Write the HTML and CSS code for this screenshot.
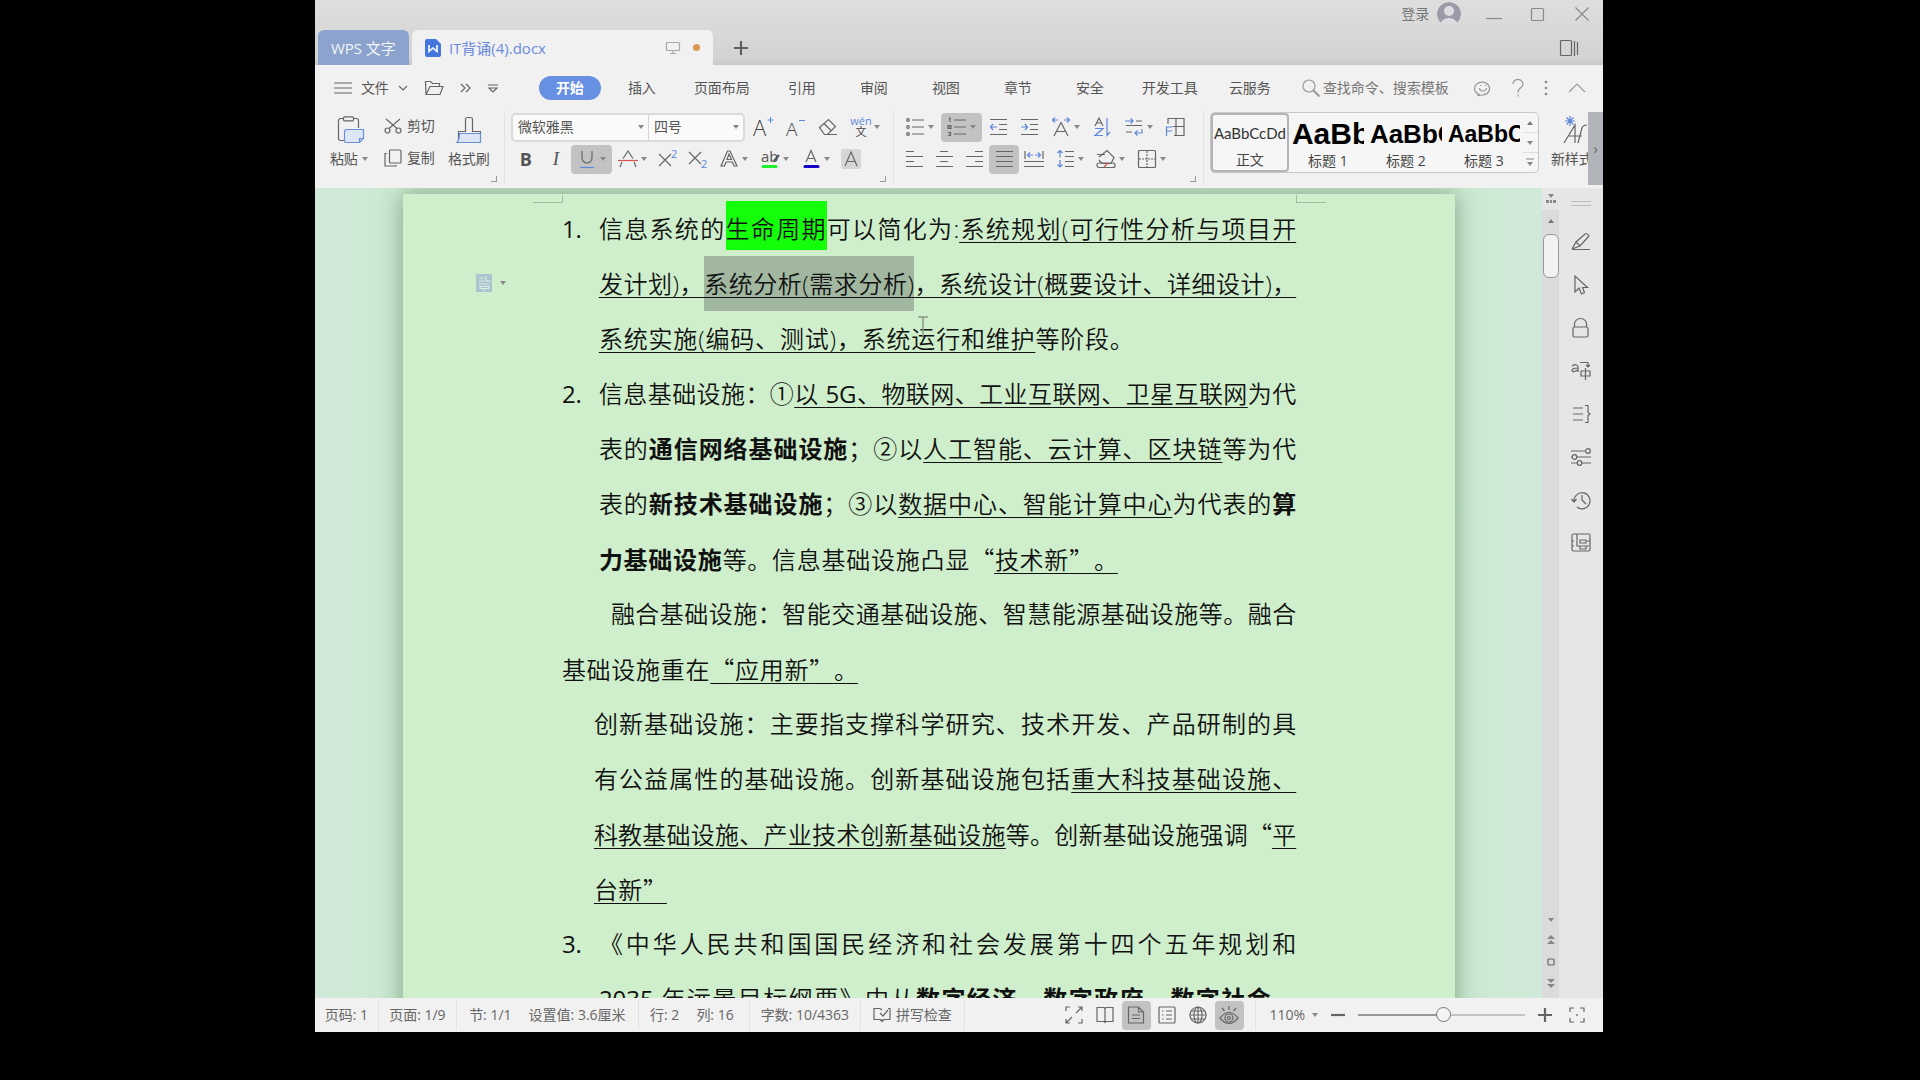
FILE: index.html
```html
<!DOCTYPE html>
<html lang="zh-CN">
<head>
<meta charset="utf-8">
<title>IT背诵(4).docx</title>
<link rel="stylesheet" href="styles.css">
</head>
<body>
<div class="app">
  <header class="titlebar">
    <div class="account-row">
      <button class="login">登录
        <svg width="24" height="24" viewBox="0 0 24 24"><defs><clipPath id="av"><circle cx="12" cy="12" r="12"/></clipPath></defs><g clip-path="url(#av)"><circle cx="12" cy="12" r="12" fill="#9a9ba6"/><circle cx="12" cy="9" r="5" fill="#dcdde2"/><path d="M2 24c2-5 5-8 10-8s8 3 10 8z" fill="#dcdde2"/></g></svg>
      </button>
      <button class="win" aria-label="最小化"><svg width="16" height="16"><path d="M0 12.500h16"/></svg></button>
      <button class="win" aria-label="最大化"><svg width="16" height="16"><rect x="1.500" y="2.500" width="12" height="12" rx="1"/></svg></button>
      <button class="win" aria-label="关闭"><svg width="16" height="16"><path d="M1.500 1.500l13 13M14.500 1.500l-13 13"/></svg></button>
    </div>
    <div class="tab-row">
      <button class="tab home-tab">WPS 文字</button>
      <div class="tab doc-tab">
        <svg width="16" height="18" viewBox="0 0 16 18"><path d="M2 0h9l5 5v11a2 2 0 0 1-2 2H2a2 2 0 0 1-2-2V2a2 2 0 0 1 2-2z" fill="#4477dd"/><path d="M4 6v6.500l4-3.500 4 3.500V6" fill="none" stroke="#fff" stroke-width="1.600"/></svg>
        <span class="doc-name">IT背诵(4).docx</span>
        <svg width="14" height="14" class="line-icon pale"><rect x=".5" y="1.500" width="13" height="8" rx="1"/><path d="M7 9.500v3M4 12.500h6"/></svg>
        <i class="dot"></i>
      </div>
      <button class="add" aria-label="新建"><svg width="16" height="16"><path d="M8 1v14M1 8h14" stroke="#606060" stroke-width="2.200"/></svg></button>
      <button class="pane" aria-label="窗格"><svg width="20" height="18" class="line-icon"><rect x="1.500" y="1.500" width="11" height="15" rx="1"/><path d="M15.500 2v15M18.500 3v13"/></svg></button>
    </div>
  </header>

  <nav class="menu">
    <button class="file"><svg width="18" height="12" class="line-icon"><path d="M0 1h18M0 6h18M0 11h18"/></svg><span>文件</span><svg width="10" height="6" class="line-icon"><path d="M1 1l4 4 4-4"/></svg></button>
    <button class="quick" aria-label="打开"><svg width="20" height="16" class="line-icon"><path d="M2 14.500l-.5-13h5l2 2h7v3M2 14.500l4-8h13l-3 8z"/></svg></button>
    <button class="quick" aria-label="更多"><svg width="12" height="10" class="line-icon"><path d="M1 1l4 4-4 4M6 1l4 4-4 4"/></svg></button>
    <button class="quick" aria-label="自定义"><svg width="10" height="9" class="line-icon"><path d="M0 1h10M1 4l4 4 4-4z"/></svg></button>
    <div class="menu-tabs">
      <button class="active"><span>开始</span></button>
      <button>插入</button><button class="wide">页面布局</button><button>引用</button><button>审阅</button><button>视图</button><button>章节</button><button>安全</button><button class="wide">开发工具</button><button>云服务</button>
    </div>
    <label class="search"><svg width="18" height="18" class="line-icon"><circle cx="7" cy="7" r="6"/><path d="M11.500 11.500l6 6" stroke-width="2"/></svg><input type="text" placeholder="查找命令、搜索模板" aria-label="查找命令"></label>
    <div class="menu-end">
      <button aria-label="反馈"><svg width="18" height="16" class="line-icon"><path d="M5 14.500a7.500 6.500 0 1 1 4 .5l-5 .5z"/><path d="M5.500 8a3.500 3 0 0 0 7 0M6.500 5v1M11.500 5v1"/></svg></button>
      <button aria-label="帮助"><svg width="12" height="18" class="line-icon"><path d="M1 5a5 4.500 0 1 1 8 3.500q-3 2-3 5M6 15.500v2"/></svg></button>
      <button aria-label="选项"><svg width="4" height="16"><g fill="#888"><circle cx="2" cy="2" r="1.300"/><circle cx="2" cy="8" r="1.300"/><circle cx="2" cy="14" r="1.300"/></g></svg></button>
      <button aria-label="收起"><svg width="18" height="10" class="line-icon"><path d="M1 9l8-8 8 8"/></svg></button>
    </div>
  </nav>

  <section class="ribbon">
    <div class="group clipboard">
      <button class="big"><svg width="28" height="28" class="line-icon"><path d="M8 24.500H3.500a2 2 0 0 1-2-2v-18a2 2 0 0 1 2-2h16a2 2 0 0 1 2 2V12" /><rect x="6.500" y=".8" width="10" height="4" rx="1" fill="#f1f1f1"/><path d="M9 13.500h17.500v9l-4 4H9a1.500 1.500 0 0 1-1.500-1.500V15z" fill="#dde6f5" stroke="#6a8fd8"/><path d="M26.500 22.500h-4v4" stroke="#6a8fd8"/></svg><span class="cap">粘贴<i class="arr"></i></span></button>
      <div class="stack">
        <button><svg width="18" height="16" class="line-icon"><circle cx="3.500" cy="12.500" r="2.500"/><circle cx="14.500" cy="12.500" r="2.500"/><path d="M2 1l11 9.500M16 1L5 10.500"/></svg>剪切</button>
        <button><svg width="18" height="18" class="line-icon"><rect x="5.500" y="1" width="11.500" height="13" rx="1"/><path d="M3 4.500H1v12.500h11v-1"/></svg>复制</button>
      </div>
      <button class="big painter"><svg width="26" height="28" class="line-icon"><path d="M2.500 24V15.500h7V3.500a2 2 0 0 1 2-2h3a2 2 0 0 1 2 2v12h8V18"/><path d="M3.500 17.500h21v9H1q2.500-3 2.500-9z" fill="#dde6f5" stroke="#6a8fd8"/></svg><span class="cap">格式刷</span></button>
      <i class="corner"></i>
    </div>

    <div class="group font">
      <div class="row first">
        <div class="combos">
          <span class="combo face"><select aria-label="字体"><option>微软雅黑</option></select><i class="arr"></i></span>
          <span class="combo size"><select aria-label="字号"><option>四号</option></select><i class="arr"></i></span>
        </div>
        <button class="tool" aria-label="增大字号"><svg width="22" height="22"><text x="0" y="20" class="ltr">A</text><path d="M17.500 1v6M14.500 4h6" stroke="#5f86d8"/></svg></button>
        <button class="tool" aria-label="减小字号"><svg width="22" height="22"><text x="1" y="20" class="ltr sm">A</text><path d="M14 4.500h6" stroke="#5f86d8"/></svg></button>
        <button class="tool" aria-label="清除格式"><svg width="20" height="20" class="line-icon"><path d="M1.500 10.500l9-8 7 7-8 8H6.500zM6 6.500l7 7M8 17.500h11"/></svg></button>
        <button class="tool drop" aria-label="拼音"><svg width="20" height="22"><text x="10" y="9" text-anchor="middle" class="tiny blue">wén</text><text x="10" y="20" text-anchor="middle" class="tiny">文</text></svg><i class="arr"></i></button>
      </div>
      <div class="row">
        <button class="tool bold" aria-label="加粗">B</button>
        <button class="tool italic" aria-label="倾斜">I</button>
        <button class="tool drop on" aria-label="下划线"><svg width="16" height="20" class="line-icon"><path d="M3 2v7a5 5 0 0 0 10 0V2"/><path d="M1 18.500h14" stroke="#5f86d8"/></svg><i class="arr"></i></button>
        <button class="tool drop" aria-label="删除线"><svg width="20" height="20" class="line-icon"><path d="M5 9.500L10 2l5 7.500M4 13l-2 5M16 13l2 5"/><path d="M0 11.500h20" stroke="#d9534f"/></svg><i class="arr"></i></button>
        <button class="tool" aria-label="上标"><svg width="20" height="20" class="line-icon"><path d="M1 5l12 12M13 5L1 17"/><text x="13" y="9" class="tiny blue">2</text></svg></button>
        <button class="tool" aria-label="下标"><svg width="20" height="20" class="line-icon"><path d="M1 3l12 12M13 3L1 15"/><text x="13" y="19" class="tiny blue">2</text></svg></button>
        <button class="tool drop" aria-label="文字效果"><svg width="20" height="20" class="line-icon"><path d="M2 17L8.500 2h2.500L18 17h-3l-1.500-4H7l-1.500 4zM8 10.500h4.500L10 5z"/></svg><i class="arr"></i></button>
        <button class="tool drop" aria-label="突出显示"><svg width="20" height="20"><text x="1" y="13" class="ab">ab</text><path d="M14 12l5-6" stroke="#555" stroke-width="2"/><path d="M3 17.500h13" stroke="#1fef2f" stroke-width="3" stroke-linecap="round"/></svg><i class="arr"></i></button>
        <button class="tool drop" aria-label="字体颜色"><svg width="20" height="20" class="line-icon"><path d="M5 13L10 1.500 15 13M6.500 9.500h7"/><path d="M4 17.500h13" stroke="#1200c8" stroke-width="3" stroke-linecap="round"/></svg><i class="arr"></i></button>
        <button class="tool" aria-label="字符底纹"><svg width="20" height="20" class="line-icon"><rect width="20" height="20" rx="2" fill="#d6d6d6" stroke="none"/><path d="M4 17L10 3l6 14M6 12.500h8"/></svg></button>
      </div>
      <i class="corner"></i>
    </div>

    <div class="group para">
      <div class="row first">
        <button class="tool drop" aria-label="项目符号"><svg width="18" height="20" class="line-icon"><path d="M6 3h12M6 10h12M6 17h12"/><g><circle cx="2" cy="3" r="1.300"/><circle cx="2" cy="10" r="1.300"/><circle cx="2" cy="17" r="1.300"/></g></svg><i class="arr"></i></button>
        <button class="tool drop on" aria-label="编号"><svg width="18" height="20" class="line-icon"><path d="M6 3h12M6 10h12M6 17h12"/><path d="M1 2l1-1v4M0 8.500h3v3H0zM0 10h3M0 15.500h2.500v3H0M1 17h1"/></svg><i class="arr"></i></button>
        <button class="tool" aria-label="减少缩进"><svg width="18" height="18" class="line-icon"><path d="M1 1.500h17M10 6.500h8M10 11.500h8M1 16.500h17"/><path d="M8 9H1.500M4 6L1.500 9 4 12" stroke="#5f86d8"/></svg></button>
        <button class="tool" aria-label="增加缩进"><svg width="18" height="18" class="line-icon"><path d="M1 1.500h17M10 6.500h8M10 11.500h8M1 16.500h17"/><path d="M1 9h7M5 6l2.500 3L5 12" stroke="#5f86d8"/></svg></button>
        <button class="tool drop" aria-label="字符缩放"><svg width="20" height="20" class="line-icon"><path d="M3 19L10 5.500 17 19M6 14.500h8"/><path d="M7 3H1.500M4 .5L1.500 3 4 5.500M13 3h5.500M16 .5L18.500 3 16 5.500" stroke="#5f86d8"/></svg><i class="arr"></i></button>
        <button class="tool" aria-label="排序"><svg width="18" height="20" class="line-icon"><path d="M2 9L6 1l4 8M3.500 6h5"/><path d="M2 11.500h8l-8 7h8M14 1v17.500l3-3.500" stroke="#5f86d8"/></svg></button>
        <button class="tool drop" aria-label="显示编辑标记"><svg width="18" height="20" class="line-icon"><path d="M11 4h6M1 8.500h16M1 15h6"/><path d="M0 4h8M5.500 1.500L8 4 5.500 6.500M17 12v4h-7M12.500 13.500L10 16l2.500 2.500" stroke="#5f86d8"/></svg><i class="arr"></i></button>
        <button class="tool" aria-label="制表位"><svg width="20" height="20" class="line-icon"><path d="M3 7V1.500h16v17H9M11 1.500v17M8 9.500h11"/><path d="M1.500 19v-9h6M1.500 14H7" stroke="#5f86d8"/></svg></button>
      </div>
      <div class="row">
        <button class="tool" aria-label="左对齐"><svg width="18" height="18" class="line-icon"><path d="M1 1.500h8M1 6.500h17M1 11.500h8M1 16.500h17"/></svg></button>
        <button class="tool" aria-label="居中"><svg width="18" height="18" class="line-icon"><path d="M5 1.500h8M1 6.500h17M5 11.500h8M1 16.500h17"/></svg></button>
        <button class="tool" aria-label="右对齐"><svg width="18" height="18" class="line-icon"><path d="M10 1.500h8M1 6.500h17M10 11.500h8M1 16.500h17"/></svg></button>
        <button class="tool on" aria-label="两端对齐"><svg width="18" height="18" class="line-icon"><path d="M1 1.500h17M1 6.500h17M1 11.500h17M1 16.500h17"/></svg></button>
        <button class="tool" aria-label="分散对齐"><svg width="20" height="18" class="line-icon"><path d="M1 1v8M19 1v8M0 11.500h20M0 16.500h20"/><path d="M4 5h5M6 2.500L3.500 5 6 7.500M11 5h5M14 2.500L16.500 5 14 7.500" stroke="#5f86d8"/></svg></button>
        <button class="tool drop" aria-label="行距"><svg width="18" height="18" class="line-icon"><path d="M9 1.500h9M9 6.500h9M9 11.500h9M9 16.500h9"/><path d="M4 .5v7M1.500 3L4 .5 6.500 3M4 10v7M1.500 14.500L4 17l2.500-2.500" stroke="#5f86d8"/></svg><i class="arr"></i></button>
        <button class="tool drop" aria-label="底纹"><svg width="20" height="20" class="line-icon"><path d="M3 8l8-6.500 7 7-3 6H6L3 11M1 5.500h8"/><rect x="1" y="14" width="18" height="4.500" rx="2"/><path d="M8 18l4-4" stroke="#d9534f"/></svg><i class="arr"></i></button>
        <button class="tool drop" aria-label="边框"><svg width="20" height="20" class="line-icon"><rect x="1.500" y="1.500" width="17" height="17" rx="1"/><path d="M10 2v16M2 10h16" stroke-dasharray="2 1"/></svg><i class="arr"></i></button>
      </div>
      <i class="corner"></i>
    </div>

    <div class="group styles">
      <div class="gallery">
        <button class="style chosen"><span class="sample body">AaBbCcDd</span><span>正文</span></button>
        <button class="style"><span class="sample h1">AaBb</span><span>标题 1</span></button>
        <button class="style"><span class="sample h2">AaBbC</span><span>标题 2</span></button>
        <button class="style"><span class="sample h3">AaBbCc</span><span>标题 3</span></button>
        <div class="spin"><button aria-label="上一行"><i class="arr up"></i></button><button aria-label="下一行"><i class="arr"></i></button><button aria-label="展开"><svg width="8" height="9"><path d="M0 1h8" stroke="#888"/><path d="M1 4h6L4 8z" fill="#888"/></svg></button></div>
      </div>
      <button class="new-style"><svg width="26" height="28" class="line-icon"><path d="M3 27L14 9v18M7 20h7M13 20h8M17 27l4-15q1-3 5-3"/><path d="M9 0v10M4 5h10M5.500 1.500l7 7M12.500 1.500l-7 7" stroke="#5f86d8"/></svg><span>新样式</span></button>
      <button class="expander" aria-label="更多">›</button>
    </div>
  </section>

  <main class="workspace">
    <div class="canvas">
      <article class="page">
        <i class="mark mark-left"></i><i class="mark mark-right"></i>
        <button class="para-tag" aria-label="段落布局"><svg width="16" height="18"><rect width="16" height="18" fill="#a9c3d0"/><path d="M3 4h5M3 7h5M10 2v5h5M3 10h10M4 12.500h9v2H4zM8 15v2" stroke="#dcecdc" fill="none" stroke-width="1.200"/></svg><i class="arr"></i></button>
        <svg class="ibeam" width="10" height="26"><path d="M0 1h10M5 1v19" stroke="#8a9a88" stroke-width="1.500"/></svg>

        <div class="item"><span class="num">1.</span><p>
          <span class="line">信息系统的<mark>生命周期</mark>可以简化为:<u>系统规划(可行性分析与项目开</u></span>
          <span class="line"><u>发计划)，<span class="selected">系统分析(需求分析)</span>，系统设计(概要设计、详细设计)，</u></span>
          <span class="line short-a"><u>系统实施(编码、测试)，系统运行和维护</u>等阶段。</span>
        </p></div>
        <div class="item"><span class="num">2.</span><p>
          <span class="line">信息基础设施：①<u>以 <span class="num">5G</span>、物联网、工业互联网、卫星互联网</u>为代</span>
          <span class="line">表的<b>通信网络基础设施</b>；②以<u>人工智能、云计算、区块链</u>等为代</span>
          <span class="line">表的<b>新技术基础设施</b>；③以<u>数据中心、智能计算中心</u>为代表的<b>算</b></span>
          <span class="line short-b"><b>力基础设施</b>等。信息基础设施凸显<q>“</q><u>技术新<q>”</q>。</u></span>
        </p></div>
        <p>
          <span class="line first-line">融合基础设施：智能交通基础设施、智慧能源基础设施等。融合</span>
          <span class="line short-c">基础设施重在<u><q>“</q>应用新<q>”</q>。</u></span>
        </p>
        <p class="inset">
          <span class="line">创新基础设施：主要指支撑科学研究、技术开发、产品研制的具</span>
          <span class="line">有公益属性的基础设施。创新基础设施包括<u>重大科技基础设施、</u></span>
          <span class="line"><u>科教基础设施、产业技术创新基础设施</u>等。创新基础设施强调<q>“</q><u>平</u></span>
          <span class="line short-d"><u>台新<q>”</q></u></span>
        </p>
        <div class="item"><span class="num">3.</span><p>
          <span class="line">《中华人民共和国国民经济和社会发展第十四个五年规划和</span>
          <span class="line"><span class="num">2035</span> 年远景目标纲要》中从<b>数字经济、数字政府、数字社会、</b></span>
        </p></div>
      </article>
    </div>
    <div class="scrollbar">
      <div class="ruler-btn"><svg width="10" height="10"><path d="M2 0h6L5 4z" fill="#888"/><path d="M0 6h3v3H0zM4 6h2v3H4zM7 6h3v3H7z" fill="#888"/></svg></div>
      <i class="arr up"></i>
      <div class="thumb"></div>
      <div class="nav-arrows"><i class="arr"></i><svg width="8" height="10"><path d="M0 4l4-4 4 4zM0 9l4-4 4 4z" fill="#888"/></svg><svg width="8" height="8" class="line-icon"><rect x="1" y="1" width="6" height="6" rx="1"/></svg><svg width="8" height="10"><path d="M0 0l4 4 4-4zM0 5l4 4 4-4z" fill="#888"/></svg></div>
    </div>
    <aside class="side">
      <i class="grip"></i>
      <button aria-label="编辑"><svg width="20" height="20" class="line-icon"><path d="M1 17.500h18M1 17l4-7 9-8q3-1 4 2l-9 10-8 3M5 10l4 4"/></svg></button>
      <button aria-label="选择"><svg width="20" height="20" class="line-icon"><path d="M4 1v16l4-4 2.500 6 3-1.500-2-5h5z"/></svg></button>
      <button aria-label="保护"><svg width="20" height="20" class="line-icon"><rect x="2" y="9" width="15" height="10" rx="1.500"/><path d="M3.500 9V6a6 5.500 0 0 1 12 0v3"/></svg></button>
      <button aria-label="翻译"><svg width="20" height="20" class="line-icon"><path d="M1 5q5-3 6 1v5M7 7Q1 7 1 9.500T7 9M9 1.500h8V6M15 4l2 2 2-2M10 10h9v5h-9zM14.500 7v12"/></svg></button>
      <button aria-label="段落"><svg width="20" height="20" class="line-icon"><path d="M2 4h10M2 10h10M2 16h10M14 1.500h3v7l2 1.500-2 1.500v7h-3"/></svg></button>
      <button aria-label="设置"><svg width="20" height="20" class="line-icon"><path d="M0 4h14M6 10h14M0 10h1M0 16h6M11 16h9"/><circle cx="17" cy="4" r="2.300"/><circle cx="3.500" cy="10" r="2.300"/><circle cx="8.500" cy="16" r="2.300"/></svg></button>
      <button aria-label="历史"><svg width="20" height="20" class="line-icon"><path d="M3 11a8 8 0 1 1 3 6M.5 9L3 12l2.500-3M11 5v5l4 4"/></svg></button>
      <button aria-label="导航"><svg width="20" height="20" class="line-icon"><rect x="1" y="1" width="18" height="17" rx="1.500"/><path d="M6 1v12h12M9 7h6v3H9zM9 13h6v3H9zM1 8h2M1 13h2M16 8h3"/></svg></button>
    </aside>
  </main>

  <footer class="status">
    <span class="cell c1">页码: 1</span>
    <span class="cell c2">页面: 1/9</span>
    <span class="cell c3"><span>节: 1/1</span><span>设置值: 3.6厘米</span></span>
    <span class="cell c4"><span>行: 2</span><span>列: 16</span></span>
    <span class="cell c5">字数: 10/4363</span>
    <button class="cell c6"><svg width="18" height="16" class="line-icon"><path d="M9 3L7 1.500H1v11h6l2 2 2-2h6v-11h-2M9 14v-2M7 6l3 3 5-6"/></svg>拼写检查</button>
    <div class="views">
      <button aria-label="全屏"><svg width="18" height="18" class="line-icon"><path d="M1 5V1h4M13 1h4v4M17 13v4h-4M5 17H1v-4M11 7l6-6M7 11l-6 6"/></svg></button>
      <button aria-label="阅读"><svg width="18" height="18" class="line-icon"><path d="M9 2.500L8 1.500H1v14h7l1 1 1-1h7v-14h-7zM9 2.500v14"/></svg></button>
      <button class="on" aria-label="页面视图"><svg width="18" height="18" class="line-icon"><path d="M1.500 1h10l5 5v11h-15zM11.500 1v5h5M5 9h8M5 12.500h8"/></svg></button>
      <button aria-label="大纲"><svg width="18" height="18" class="line-icon"><rect x="1" y="1" width="16" height="16" rx="1"/><path d="M4 5h1.500M4 9h1.500M4 13h1.500M8 5h6M8 9h6M8 13h6"/></svg></button>
      <button aria-label="网页"><svg width="18" height="18" class="line-icon"><circle cx="9" cy="9" r="8"/><ellipse cx="9" cy="9" rx="4" ry="8"/><path d="M1 9h16M2.500 5h13M2.500 13h13M9 1v16"/></svg></button>
      <button class="on" aria-label="护眼"><svg width="20" height="20" class="line-icon"><path d="M1 13q9-11 18 0-9 11-18 0zM10 1v4M3 3l2.500 3M17 3l-2.500 3"/><circle cx="10" cy="13" r="4"/><circle cx="10" cy="13" r="1.500"/></svg></button>
    </div>
    <div class="zoom">
      <button class="pct">110%<i class="arr"></i></button>
      <button aria-label="缩小"><svg width="14" height="14"><path d="M0 7h14" stroke="#666" stroke-width="2.200"/></svg></button>
      <input type="range" min="0" max="100" value="51" aria-label="缩放">
      <button aria-label="放大"><svg width="14" height="14"><path d="M0 7h14M7 0v14" stroke="#666" stroke-width="2.200"/></svg></button>
      <button class="fit" aria-label="适应窗口"><svg width="16" height="16" class="line-icon"><path d="M1 5V1h4M11 1h4v4M15 11v4h-4M5 15H1v-4M8 7v2"/></svg></button>
    </div>
  </footer>
</div>
</body>
</html>
```
FILE: styles.css
```css
* { box-sizing: border-box; }
html, body { height: 100%; margin: 0; }
body {
  background: #000;
  padding: 0 16.5% 48px 16.4%;
  font: 14px/20px "Open Sans", "Noto Sans CJK SC", sans-serif;
  color: #555;
  overflow: hidden;
}
button, input, select { font: inherit; color: inherit; background: none; border: 0; padding: 0; margin: 0; outline: 0; }
button { display: flex; align-items: center; justify-content: center; white-space: nowrap; }
svg { flex: none; display: block; overflow: visible; }
.line-icon { fill: none; stroke: #666; stroke-width: 1.2; }
.line-icon text { stroke: none; }
.pale { stroke: #aaa; }
.arr { flex: none; width: 0; height: 0; border: 3px solid transparent; border-top: 4px solid #888; border-bottom: 0; }
.arr.up { border-top: 0; border-bottom: 4px solid #777; }
.app { height: 100%; display: flex; flex-direction: column; background: #f1f1f1; overflow: hidden; }

/* title bar */
.titlebar { flex: none; background: linear-gradient(#dddedd, #d2d3d2 90%, #c6c7c6); }
.account-row { height: 30px; display: flex; justify-content: flex-end; align-items: center; padding: 0 13px 2px 0; gap: 28px; }
.login { gap: 8px; color: #777; margin-right: -3px; }
.win svg { fill: none; stroke: #8a8a8a; stroke-width: 1.2; }
.tab-row { height: 35px; display: flex; align-items: stretch; padding-left: 3px; gap: 3px; }
.tab { border-radius: 6px 6px 0 0; }
.home-tab { width: 91px; background: #8ba3cd; color: #f4f6fa; font-size: 15px; }
.doc-tab { width: 301px; display: flex; align-items: center; padding: 0 13px; background: #f1f1f1; color: #6a8bdc; font-size: 15px; gap: 8px; }
.doc-name { flex: 1; }
.dot { width: 7px; height: 7px; border-radius: 50%; background: #d99a50; margin-left: 5px; }
.add { width: 50px; }
.pane { margin-left: auto; padding-right: 24px; }

/* menu */
.menu { flex: none; height: 46px; display: flex; align-items: center; padding-left: 19px; gap: 16px; }
.file { gap: 9px; }
.menu-tabs { flex: none; display: flex; margin-left: 20px; }
.menu-tabs button { width: 72px; height: 24px; }
.menu-tabs .wide { width: 88px; }
.menu-tabs .active span { width: 62px; line-height: 24px; border-radius: 12px; background: #678fe2; color: #fff; font-weight: 700; }
.search { flex: 1 1 0; min-width: 0; display: flex; align-items: center; gap: 3px; }
.search input { flex: 1 1 0; min-width: 0; }
.search input::placeholder { color: #777; opacity: 1; }
.search .line-icon, .menu-end .line-icon { stroke: #999; }
.menu-end { flex: none; display: flex; gap: 20px; padding-right: 17px; }

/* ribbon */
.ribbon { flex: none; height: 77px; display: flex; overflow: hidden; }
.group { flex: none; position: relative; border-right: 1px solid #e2e2e2; margin-bottom: 3px; padding-top: 1px; }
.corner { position: absolute; right: 7px; bottom: 3px; width: 6px; height: 6px; border: solid #999; border-width: 0 1px 1px 0; }
.clipboard { width: 190px; display: flex; padding-left: 10px; }
.big { width: 48px; flex-direction: column; padding-top: 4px; gap: 5px; justify-content: flex-start; }
.big svg { margin-left: 4px; }
.painter { margin-left: 10px; }
.painter svg { margin-left: 0; }
.cap { display: flex; align-items: center; gap: 4px; }
.stack { margin-left: 11px; display: flex; flex-direction: column; gap: 4px; }
.stack button { height: 28px; gap: 5px; }
.font { width: 389px; padding-left: 6px; }
.para { width: 310px; padding-left: 5px; }
.row { display: flex; height: 30px; align-items: center; }
.row.first { gap: 2px; margin-bottom: 2px; }
.para .row.first { gap: 1px; }
.combos { display: flex; height: 29px; width: 234px; margin-right: 2px; border: 2px solid #dadada; border-radius: 5px; background: #fafafa; }
.combo { display: flex; align-items: center; padding: 0 4px 0 5px; }
.combo.face { flex: 1; border-right: 1px solid #d4d4d4; }
.combo.size { width: 94px; }
.combo select { flex: 1; min-width: 0; appearance: none; }
.tool { flex: none; width: 30px; height: 29px; border-radius: 4px; }
.tool.drop { width: 41px; justify-content: space-between; padding: 0 6px 0 4px; }
.tool.drop svg { margin: 0 auto; }
.on { background: #c2c2c2; border-radius: 4px; }
.bold { font: 700 18px/20px "Open Sans", sans-serif; }
.italic { font: italic 19px/20px "Liberation Serif", serif; }
.ltr { font-size: 22px; font-weight: 300; fill: #444; }
.ltr.sm { font-size: 19px; }
.tiny { font-size: 11px; fill: #444; }
.tiny.blue { fill: #5f86d8; }
.ab { font-size: 15px; fill: #555; }
.styles { flex: 1; display: flex; min-width: 0; padding-left: 6px; border: 0; margin: 0; }
.gallery { flex: none; display: flex; height: 61px; width: 329px; border: 1px solid #c8c8c8; border-radius: 5px; background: #f6f6f6; }
.style { width: 78px; flex-direction: column; padding: 3px 3px 0; color: #444; overflow: hidden; }
.chosen { border: 2px solid #b4b4b4; border-radius: 4px; padding: 1px 1px 0; }
.sample { align-self: stretch; height: 34px; line-height: 34px; overflow: hidden; text-align: left; color: #000; font-family: "Liberation Sans", sans-serif; font-weight: 700; }
.sample.body { font: 400 15px/34px Lato, sans-serif; color: #333; text-align: center; }
.h1 { font-size: 30px; }
.h2 { font-size: 26px; }
.h3 { font-size: 23px; }
.spin { flex: 1; display: flex; flex-direction: column; }
.spin button { flex: 1; }
.spin button + button { border-top: 1px solid #ddd; }
.new-style { flex: 1; min-width: 0; overflow: hidden; margin-left: 12px; flex-direction: column; align-items: flex-start; justify-content: flex-start; padding-top: 4px; gap: 5px; }
.new-style svg { margin-left: 10px; }
.expander { flex: none; width: 15px; margin-bottom: 3px; background: #b1b5b9; color: #666; }

/* workspace */
.workspace { flex: 1; min-height: 0; display: flex; overflow: hidden; }
.canvas { flex: 1; min-width: 0; padding: 6px 87px 0 88px; overflow: hidden; background: linear-gradient(90deg, #d1e9d9, #cbead0 8%, #cbead0 92%, #d1e9d9); }
.page { position: relative; padding: 7px 159px 0; background: #cfeecb; box-shadow: 0 0 22px rgba(50, 90, 60, .5); color: #111; font-size: 24px; line-height: 55px; font-weight: 350; text-spacing-trim: space-all; }
.page p { margin: 0; }
.item { display: grid; grid-template-columns: 37px minmax(0, 1fr); }
.num { font-weight: 400; }
.inset { padding-left: 32px; }
.line { display: block; height: 55px; white-space: nowrap; text-align: justify; text-align-last: justify; }
.first-line { margin-left: 49px; }
.short-a { width: 535px; }
.short-b { width: 519px; }
.short-c { width: 296px; }
.short-d { width: 73px; }
.page u { text-decoration: underline 1px; text-underline-offset: 4px; text-decoration-skip-ink: none; }
.page b { font-weight: 700; }
.page q { quotes: none; font-family: "Noto Sans CJK SC", sans-serif; }
.page mark { background: #14ff0a; color: inherit; padding: 11px 0 5px; }
.selected { background: #a1b7a0; padding: 11px 0; }
.mark { position: absolute; top: 1px; width: 30px; height: 8px; border-bottom: 1px solid #a3baa1; }
.mark-left { left: 130px; border-right: 1px solid #a3baa1; }
.mark-right { right: 129px; border-left: 1px solid #a3baa1; }
.para-tag { position: absolute; left: 73px; top: 80px; gap: 8px; }
.ibeam { position: absolute; left: 515px; top: 122px; }
.scrollbar { flex: none; width: 17px; display: flex; flex-direction: column; align-items: center; background: #dbdbdb; }
.ruler-btn { align-self: stretch; height: 22px; display: grid; place-items: center; background: #e6e6e6; margin-bottom: 9px; }
.thumb { width: 16px; height: 44px; margin-top: 11px; border: 1px solid #999; border-radius: 6px; background: #f2f2f2; }
.nav-arrows { margin-top: auto; display: flex; flex-direction: column; align-items: center; gap: 13px; padding-bottom: 9px; }
.side { flex: none; width: 44px; display: flex; flex-direction: column; align-items: center; padding-right: 1px; background: #e6e6e6; }
.side button { height: 43px; }
.grip { width: 20px; height: 5px; margin: 13px 0 14px; border: solid #bbb; border-width: 1px 0; }

/* status bar */
.status { flex: none; height: 34px; display: flex; align-items: center; font-size: 14px; color: #666; white-space: nowrap; }
.cell { height: 30px; display: flex; align-items: center; justify-content: center; border-right: 1px solid #e2e2e2; gap: 17px; }
.c1 { width: 64px; }
.c2 { width: 78px; }
.c3 { width: 182px; }
.c4 { width: 111px; padding-right: 4px; }
.c5 { width: 111px; }
.c6 { width: 104px; gap: 5px; border-width: 0 1px 0 0; border-style: solid; }
.views { margin-left: auto; display: flex; gap: 2px; padding-right: 11px; border-right: 1px solid #e2e2e2; }
.views button { width: 29px; height: 29px; }
.zoom { display: flex; align-items: center; padding: 0 18px 0 14px; gap: 13px; }
.pct { gap: 7px; }
.fit { margin-left: 4px; }
.zoom input { width: 167px; height: 20px; appearance: none; }
.zoom input::-webkit-slider-runnable-track { height: 2px; background: linear-gradient(90deg, #999 50%, #c4c4c4 50%); }
.zoom input::-webkit-slider-thumb { appearance: none; width: 15px; height: 15px; margin-top: -7px; border-radius: 50%; border: 1px solid #777; background: #f4f4f4; }
```
